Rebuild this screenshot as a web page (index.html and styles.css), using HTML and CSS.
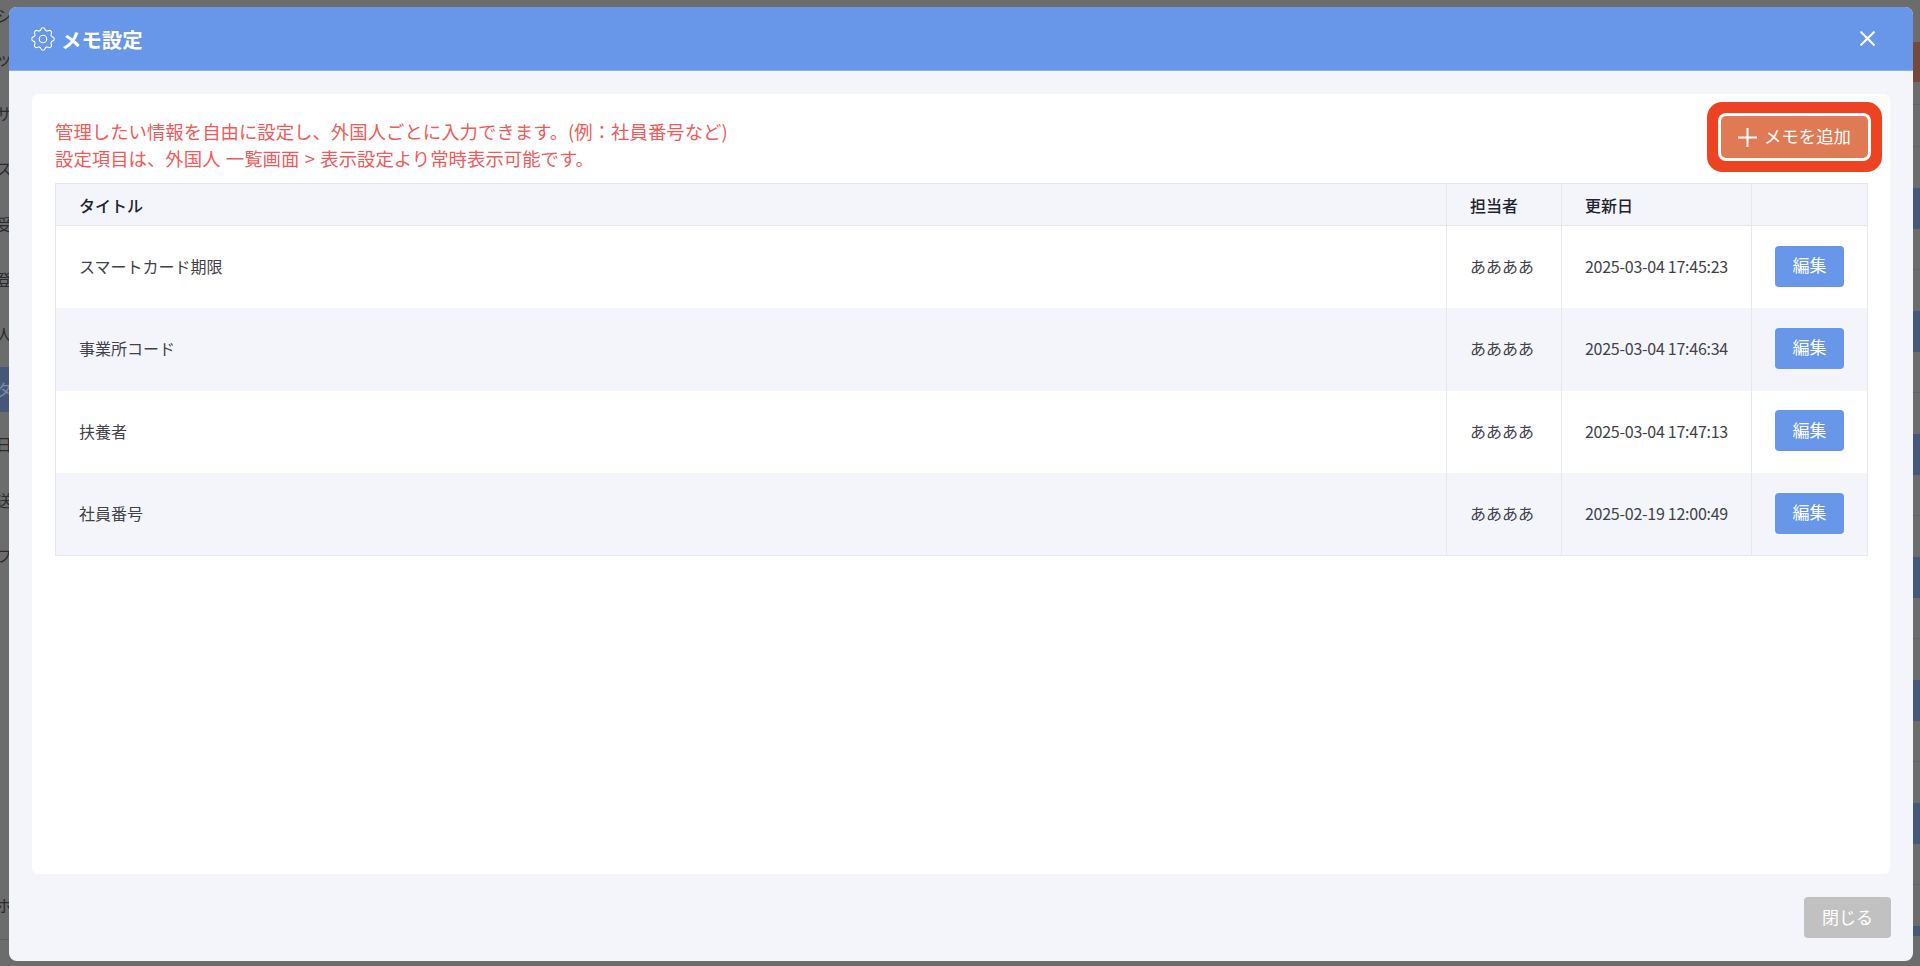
FILE: index.html
```html
<!DOCTYPE html>
<html lang="ja">
<head>
<meta charset="utf-8">
<title>メモ設定</title>
<link rel="stylesheet" href="styles.css">
</head>
<body>
<div class="page">
  <nav class="side">
    <div class="side-top">シ</div>
    <div class="side-item">ッ</div>
    <div class="side-item">サ</div>
    <div class="side-item">ス</div>
    <div class="side-item">受</div>
    <div class="side-item">登</div>
    <div class="side-item">人</div>
    <div class="side-item is-active">タ</div>
    <div class="side-item">日</div>
    <div class="side-item">送</div>
    <div class="side-item">フ</div>
    <div class="side-foot">ホ</div>
  </nav>
  <div class="rows">
    <div class="row-head"><div class="chip chip-orange"></div></div>
    <div class="row-line"></div>
    <div class="row"><div class="chip"></div></div>
    <div class="row"><div class="chip"></div></div>
    <div class="row"><div class="chip"></div></div>
    <div class="row"><div class="chip"></div></div>
    <div class="row"><div class="chip"></div></div>
    <div class="row"><div class="chip"></div></div>
    <div class="row-last"><div class="chip chip-short"></div></div>
  </div>
</div>

<section class="modal">
  <header class="modal-head">
    <div class="modal-title">
      <svg class="gear" viewBox="0 0 24 24" fill="none" stroke="currentColor" stroke-width="0.9" stroke-linecap="round" stroke-linejoin="round"><path d="M10.325 4.317c.426-1.756 2.924-1.756 3.35 0a1.724 1.724 0 002.573 1.066c1.543-.94 3.31.826 2.37 2.37a1.724 1.724 0 001.065 2.572c1.756.426 1.756 2.924 0 3.35a1.724 1.724 0 00-1.066 2.573c.94 1.543-.826 3.31-2.37 2.37a1.724 1.724 0 00-2.572 1.065c-.426 1.756-2.924 1.756-3.35 0a1.724 1.724 0 00-2.573-1.066c-1.543.94-3.31-.826-2.37-2.37a1.724 1.724 0 00-1.065-2.572c-1.756-.426-1.756-2.924 0-3.35a1.724 1.724 0 001.066-2.573c-.94-1.543.826-3.31 2.37-2.37.996.608 2.296.07 2.572-1.065z"/><circle cx="12" cy="12" r="3"/></svg>
      <h1 class="title-text">メモ設定</h1>
    </div>
    <button class="close-x" type="button" aria-label="閉じる">
      <svg viewBox="0 0 15 15" fill="none" stroke="currentColor" stroke-width="2.2" stroke-linecap="round"><path d="M1.2 1.2l12.6 12.6M13.8 1.2L1.2 13.8"/></svg>
    </button>
  </header>

  <div class="modal-body">
    <div class="card">
      <div class="intro">
        <p class="notice">管理したい情報を自由に設定し、外国人ごとに入力できます。(例：社員番号など)<br>設定項目は、外国人 一覧画面 &gt; 表示設定より常時表示可能です。</p>
        <button class="add-btn" type="button">
          <svg class="plus" viewBox="0 0 19 19" fill="none" stroke="currentColor" stroke-width="2"><path d="M9.5 0v19M0 9.5h19"/></svg>
          <span class="add-label">メモを追加</span>
        </button>
      </div>
      <table class="memo-table">
        <colgroup>
          <col class="col-title"><col class="col-owner"><col class="col-date"><col class="col-action">
        </colgroup>
        <thead>
          <tr><th>タイトル</th><th>担当者</th><th>更新日</th><th></th></tr>
        </thead>
        <tbody>
          <tr><td>スマートカード期限</td><td>ああああ</td><td class="date">2025-03-04 17:45:23</td><td class="action"><button class="edit-btn" type="button">編集</button></td></tr>
          <tr><td>事業所コード</td><td>ああああ</td><td class="date">2025-03-04 17:46:34</td><td class="action"><button class="edit-btn" type="button">編集</button></td></tr>
          <tr><td>扶養者</td><td>ああああ</td><td class="date">2025-03-04 17:47:13</td><td class="action"><button class="edit-btn" type="button">編集</button></td></tr>
          <tr><td>社員番号</td><td>ああああ</td><td class="date">2025-02-19 12:00:49</td><td class="action"><button class="edit-btn" type="button">編集</button></td></tr>
        </tbody>
      </table>
    </div>
  </div>

  <footer class="modal-foot">
    <button class="close-btn" type="button">閉じる</button>
  </footer>
</section>
</body>
</html>
```

FILE: styles.css
```css
* { box-sizing: border-box; }

html, body {
  margin: 0;
  height: 966px;
  overflow: hidden;
}

body {
  position: relative;
  font-family: "Noto Sans CJK JP", "Noto Sans", sans-serif;
  font-size: 16px;
  color: #3a3d45;
}

/* Dimmed page behind the dialog */
.page {
  height: 966px;
  display: flex;
  justify-content: space-between;
  background: #6c6c6c;
  color: #2b2b2b;
  overflow: hidden;
}

.side {
  width: 10px;
  flex: none;
  display: flex;
  flex-direction: column;
  padding-top: 3px;
}

.side-top {
  height: 28px;
  line-height: 24px;
  text-indent: -4px;
  white-space: nowrap;
}

.side-item {
  height: 55.2px;
  line-height: 55.2px;
  text-indent: -4px;
  white-space: nowrap;
  flex: none;
}

.side-item.is-active {
  background: linear-gradient(#46587a, #46587a) center / 100% 45px no-repeat;
  color: #7d8aa3;
}

.side-foot {
  margin-top: 302px;
  height: 55px;
  line-height: 40px;
  text-indent: -4px;
  border-bottom: 1px solid #5f5f5f;
}

.rows {
  width: 7px;
  flex: none;
  padding-top: 42px;
}

.row-head {
  height: 63px;
  border-bottom: 1px solid #636363;
}

.row-line {
  height: 42px;
  border-bottom: 1px solid #636363;
}

.row {
  height: 123px;
  padding-top: 41px;
  border-bottom: 1px solid #636363;
}

.row-last {
  padding-top: 41px;
}

.chip {
  height: 41px;
  background: #46587a;
}

.chip-orange { background: #74493c; height: 40px; }
.chip-short { height: 10px; }

/* Dialog */
.modal {
  position: absolute;
  left: 9px;
  top: 7px;
  width: 1904px;
  height: 954px;
  display: flex;
  flex-direction: column;
  background: #f4f5fa;
  border-radius: 8px;
  overflow: hidden;
}

.modal-head {
  height: 64px;
  flex: none;
  display: flex;
  align-items: center;
  justify-content: space-between;
  padding: 0 38px 0 19px;
  background: #6896e8;
  color: #fff;
  border-bottom: 1px solid #8fb0ee;
}

.modal-title {
  display: flex;
  align-items: center;
  gap: 3px;
}

.gear {
  width: 30px;
  height: 30px;
  display: block;
}

.title-text {
  margin: 1px 0 0;
  font-size: 20.4px;
  font-weight: 700;
  line-height: 30px;
}

.close-x {
  width: 15px;
  height: 15px;
  padding: 0;
  border: 0;
  background: none;
  color: #fff;
}

.close-x svg {
  display: block;
  width: 15px;
  height: 15px;
}

.modal-body {
  flex: 1;
  min-height: 0;
  display: flex;
  padding: 23px 23px 0 23px;
}

.card {
  flex: 1;
  background: #fff;
  border-radius: 6px;
  padding: 22px 22px 0 23px;
}

.intro {
  height: 67px;
  display: flex;
  justify-content: space-between;
  align-items: flex-start;
}

.notice {
  margin: 2px 0 0;
  font-size: 18.4px;
  line-height: 26.6px;
  word-spacing: 1.2px;
  color: #f25a5a;
}

.add-btn {
  width: 147px;
  height: 42px;
  display: flex;
  align-items: center;
  gap: 7px;
  padding: 0 0 0 17px;
  border: 0;
  border-radius: 5px;
  background: #e07a55;
  color: #fff;
  font: inherit;
  font-size: 17.4px;
  box-shadow: 0 0 0 3px #fff, 0 0 0 14px #ee4323;
}

.add-label {
  margin-bottom: 4px;
}

.plus {
  width: 19px;
  height: 19px;
  flex: none;
}

.memo-table {
  width: 1812px;
  table-layout: fixed;
  border-collapse: collapse;
  border: 1px solid #e6e7ec;
}

.col-title { width: 1391px; }
.col-owner { width: 115px; }
.col-date { width: 190px; }
.col-action { width: 116px; }

.memo-table th,
.memo-table td {
  padding: 0 0 0 23px;
  text-align: left;
  border-left: 1px solid #e6e7ec;
  border-right: 1px solid #e6e7ec;
}

.memo-table th {
  height: 42px;
  background: #f4f5fa;
  border-bottom: 1px solid #e6e7ec;
  font-weight: 500;
  color: #1f2330;
}

.memo-table td {
  height: 82.5px;
  padding-bottom: 2px;
  color: #3f424a;
  white-space: nowrap;
}

.memo-table td.date {
  letter-spacing: -0.26px;
}

.memo-table tbody tr:nth-child(even) td {
  background: #f4f5fa;
}

.memo-table td.action {
  padding: 0;
  text-align: center;
}

.edit-btn {
  width: 69px;
  height: 41px;
  padding: 0 0 3px;
  border: 0;
  border-radius: 4px;
  background: #6896e8;
  color: #fff;
  font: inherit;
  font-size: 17px;
  vertical-align: middle;
  position: relative;
  top: -1px;
}

.modal-foot {
  flex: none;
  display: flex;
  justify-content: flex-end;
  padding: 23px 22px 23px 0;
}

.close-btn {
  width: 87px;
  height: 41px;
  padding: 0 0 3px;
  border: 0;
  border-radius: 4px;
  background: #c1c1c1;
  color: #fff;
  font: inherit;
  font-size: 17px;
}
```
